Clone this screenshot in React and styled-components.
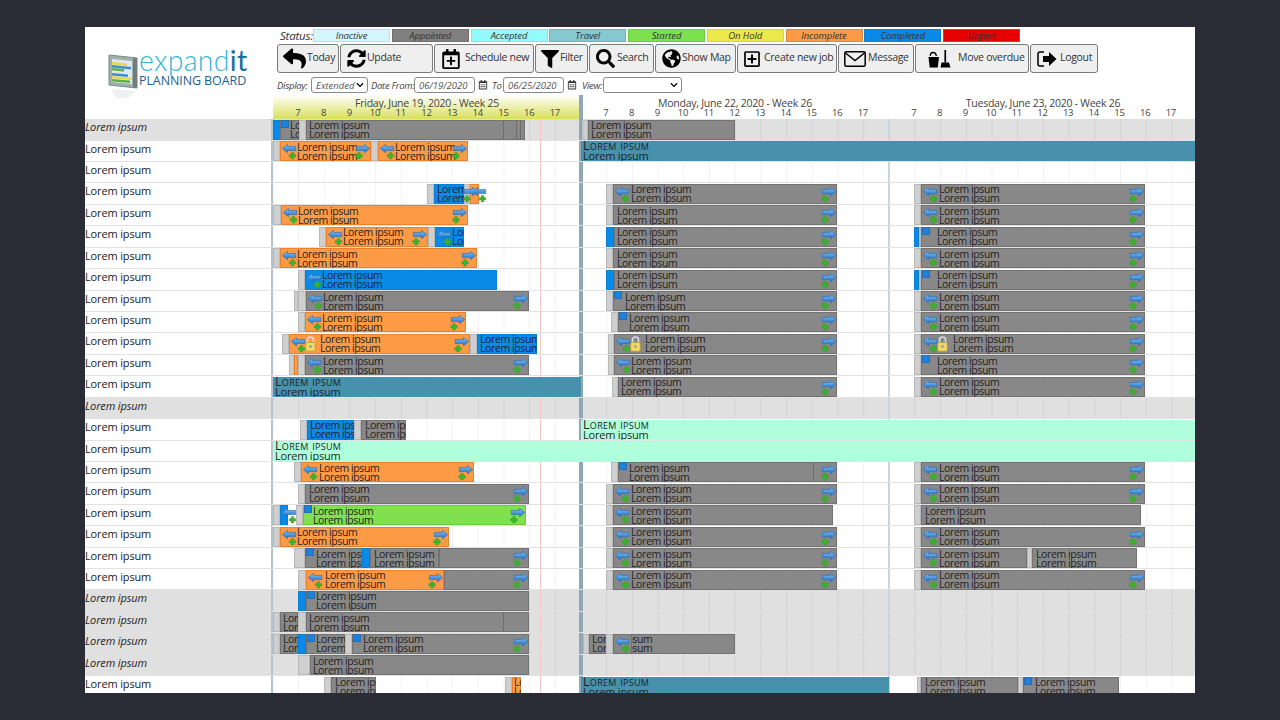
import styled, { createGlobalStyle } from "styled-components";
import {
  FaReply,
  FaSyncAlt,
  FaRegCalendarPlus,
  FaFilter,
  FaSearch,
  FaGlobeAmericas,
  FaRegPlusSquare,
  FaRegCalendarAlt,
  FaChevronDown,
} from "react-icons/fa";

const FONT = `"Open Sans", "Noto Sans", "Liberation Sans", sans-serif`;
const TRACK_X = 273;
const HOUR = 25.7;
const ROW = 21.43;

const COLORS = {
  lead: ["#cfcfcf", "#b9b9b9"],
  gray: ["#888888", "#727272"],
  orange: ["#fd9a45", "#e8822c"],
  blue: ["#0a8ae8", "#0a7fd6"],
  green: ["#80e04e", "#6cc93d"],
  teal: ["#4891ad", "#4891ad"],
  mint: ["#b0ffdc", "#b0ffdc"],
};

const GlobalStyle = createGlobalStyle`
  html, body {
    margin: 0;
    background: #2a2d36;
    font-family: ${FONT};
  }
`;

const Frame = styled.div`
  width: 1110px;
  height: 666px;
  margin: 27px 85px;
  background: #fff;
  overflow: hidden;
`;

const Header = styled.header`
  display: flex;
  height: 68px;
`;

const LogoPane = styled.div`
  width: 188px;
  flex: none;
  display: flex;
  align-items: flex-start;
  padding: 26px 0 0 23px;
  box-sizing: border-box;
  gap: 1px;
`;

const LogoText = styled.div`
  display: flex;
  flex-direction: column;
  margin-top: -5px;
`;

const LogoWord = styled.span`
  font-family: "Lato", sans-serif;
  font-weight: 300;
  font-size: 28.5px;
  line-height: 25px;
  color: #35b5d6;
  letter-spacing: 0.3px;

  b {
    font-weight: 400;
    color: #1b6d9c;
  }
`;

const LogoSub = styled.span`
  font-size: 12.5px;
  line-height: 15px;
  color: #1d5f8f;
  letter-spacing: -0.1px;
  white-space: nowrap;
`;

const Tools = styled.div`
  flex: 1;
  padding-top: 2px;
  min-width: 0;
`;

const Legend = styled.div`
  display: flex;
  align-items: center;
  height: 13px;
  padding-left: 7px;
`;

const StatusLabel = styled.span`
  font-size: 11.5px;
  font-style: italic;
  color: #333;
  width: 33px;
  letter-spacing: -0.2px;
`;

const LegendItem = styled.span`
  width: 77px;
  height: 13px;
  margin-right: 1.75px;
  box-sizing: border-box;
  border: 1px solid ${({ $edge }) => $edge};
  background: ${({ $fill }) => $fill};
  color: #333;
  font-size: 9.5px;
  font-style: italic;
  line-height: 11px;
  text-align: center;
  letter-spacing: -0.1px;
`;

const Buttons = styled.div`
  display: flex;
  gap: 1px;
  margin: 2px 0 0 4px;
`;

const ToolButton = styled.button`
  width: ${({ $w }) => $w}px;
  height: 29px;
  flex: none;
  display: flex;
  align-items: center;
  gap: ${({ $gap }) => $gap ?? 2}px;
  padding: 0 0 0 ${({ $pad }) => $pad ?? 6}px;
  box-sizing: border-box;
  background: #efefef;
  border: 1px solid #7a7a7a;
  border-radius: 3px;
  font-family: ${FONT};
  font-size: 10.5px;
  letter-spacing: -0.3px;
  color: #333;
  white-space: nowrap;

  span {
    margin-top: -3px;
  }

  svg {
    flex: none;
    color: #000;
  }
`;

const FilterBar = styled.div`
  display: flex;
  align-items: center;
  height: 16px;
  margin: 4px 0 0 4px;
  font-size: 9.5px;
  font-style: italic;
  color: #444;
`;

const FilterLabel = styled.span`
  width: ${({ $w }) => $w}px;
  flex: none;
  margin: 0 2px 0 ${({ $before }) => $before ?? 0}px;
  letter-spacing: -0.3px;
  white-space: nowrap;
`;

const Field = styled.span`
  width: ${({ $w }) => $w}px;
  height: 16px;
  flex: none;
  box-sizing: border-box;
  display: flex;
  align-items: center;
  justify-content: space-between;
  padding: 0 3px 0 4px;
  background: #fff;
  border: 1px solid #8a8a8a;
  border-radius: 3px;
  color: #555;
  font-size: 9.5px;
  font-style: italic;

  svg {
    color: #000;
  }
`;

const CalendarIcon = styled(FaRegCalendarAlt)`
  flex: none;
  width: 12px;
  margin-left: 2px;
  color: #333;
`;

const DayHeads = styled.div`
  display: flex;
  height: 24.2px;
  margin-left: 188px;
`;

const DayHead = styled.div`
  width: ${({ $w }) => $w}px;
  flex: none;
  box-sizing: border-box;
  margin-left: ${({ $pull }) => ($pull ? "-2px" : "0")};
  background: ${({ $today }) =>
    $today ? "linear-gradient(#fff, #d9e05a)" : "transparent"};
  border-right: ${({ $today }) => ($today ? "4px solid #8fa7b6" : "0")};
  color: #444;
`;

const DayTitle = styled.div`
  width: 308px;
  text-align: center;
  font-size: 10.5px;
  letter-spacing: -0.25px;
  line-height: 12px;
  padding-top: 2px;
`;

const Hours = styled.div`
  display: flex;
  width: 296px;
  padding-left: 12.15px;
  font-size: 9.5px;
  letter-spacing: -0.2px;
  line-height: 10px;
  margin-top: -1px;
`;

const Hour = styled.span`
  width: ${HOUR}px;
  flex: none;
  text-align: center;
`;

const Row = styled.div`
  display: flex;
  height: ${ROW}px;
  box-sizing: border-box;
  border-bottom: 1.4px solid #e2e2e2;
  background: ${({ $off }) => ($off ? "#e0e0e0" : "#fff")};
`;

const RowLabel = styled.div`
  width: 186px;
  flex: none;
  font-size: 11px;
  letter-spacing: -0.15px;
  font-style: ${({ $off }) => ($off ? "italic" : "normal")};
  line-height: 16px;
  color: #222;
  white-space: nowrap;
`;

const Track = styled.div`
  position: relative;
  flex: 1;
  border-left: 2px solid #b4c2cb;
  --line: ${({ $off }) => ($off ? "#d2d2d2" : "#f2f2f2")};
  background-image:
    linear-gradient(#8fa7b6, #8fa7b6),
    linear-gradient(#c9d5dc, #c9d5dc),
    linear-gradient(#f6c6c8, #f6c6c8),
    linear-gradient(to right, var(--line) 1px, transparent 1px);
  background-repeat: no-repeat, no-repeat, no-repeat, repeat;
  background-size: 4px 100%, 2px 100%, 1px 100%, ${HOUR}px 100%;
  background-position: 306px 0, 615px 0, 266.5px 0, -0.7px 0;
`;

const Bar = styled.div.attrs(({ $x, $end }) => ({
  style: { left: `${$x - TRACK_X}px`, width: `${$end - $x}px` },
}))`
  position: absolute;
  top: 0.5px;
  height: 20px;
  box-sizing: border-box;
  background: ${({ $kind }) => COLORS[$kind][0]};
  border: 1px solid ${({ $kind }) => COLORS[$kind][1]};
`;

const BarText = styled.div`
  position: absolute;
  inset: -1px;
  overflow: hidden;
  padding: ${({ $wide }) => ($wide ? 0 : 1.5)}px 0 0 ${({ $pad }) => $pad}px;
  font-size: ${({ $wide }) => ($wide ? 11 : 10.5)}px;
  letter-spacing: ${({ $wide }) => ($wide ? -0.2 : -0.4)}px;
  line-height: ${({ $wide }) => ($wide ? 10 : 9)}px;
  color: #1f1f1f;
  white-space: nowrap;
`;

const Caps = styled.div`
  font-variant: small-caps;
  font-size: 12.5px;
  letter-spacing: 0.3px;
`;

const Square = styled.span`
  position: absolute;
  left: 0;
  top: -1px;
  width: 8px;
  height: 8px;
  box-sizing: border-box;
  background: #1c82dc;
  border: 1px solid #2a6cb4;
`;

const Divider = styled.span.attrs(({ $at }) => ({
  style: { left: `${$at}px` },
}))`
  position: absolute;
  top: 0;
  bottom: 0;
  width: 1px;
  background: #6c6c6c;
`;

const IconSlot = styled.svg`
  position: absolute;
  top: 2px;
  ${({ $side }) => ($side === "left" ? "left: 1px;" : "right: 0;")}
  overflow: visible;
`;

const Lock = styled.svg`
  position: absolute;
  left: 15px;
  top: 1px;
`;

const GradientDefs = styled.svg`
  position: absolute;
  width: 0;
  height: 0;
`;

// same drawing both ways, flipped for the right hand side
const Arrow = ({ side }) => (
  <IconSlot $side={side} width="14" height="16" viewBox="0 0 14 16">
    <path
      d={
        side === "left"
          ? "M0.3 4.5 L5.5 0.3 V2.4 H13.7 V6.6 H5.5 V8.7 Z"
          : "M13.7 4.5 L8.5 0.3 V2.4 H0.3 V6.6 H8.5 V8.7 Z"
      }
      fill="url(#arrowFill)"
      stroke="#2168b4"
      strokeWidth="0.6"
    />
    <path
      d={
        side === "left"
          ? "M9.2 8.5 h2.6 v2 h2 v2.6 h-2 v2 h-2.6 v-2 h-2 v-2.6 h2 Z"
          : "M1.7 8.5 h2.6 v2 h2 v2.6 h-2 v2 h-2.6 v-2 h-2 v-2.6 h2 Z"
      }
      fill="#3cb32d"
      stroke="#2f8f24"
      strokeWidth="0.3"
    />
  </IconSlot>
);

const Padlock = () => (
  <Lock width="11" height="16" viewBox="0 0 11 16">
    <path d="M2.5 7 V4 a3 3 0 0 1 6 0 V7" fill="none" stroke="#d8dde0" strokeWidth="1.6" />
    <rect x="0.7" y="6.5" width="9.6" height="8.8" rx="1.2" fill="#f1d766" stroke="#b59a35" strokeWidth="0.7" />
    <circle cx="5.5" cy="10.5" r="1.3" fill="#8c99a8" />
  </Lock>
);

const BoardLogo = () => (
  <svg width="30" height="48" viewBox="0 0 30 48">
    <path d="M1 2 L29 5 V35 L1 32 Z" fill="#9fb0ae" stroke="#7b8a8a" />
    <path d="M4 6 L24 8 V31 L4 29 Z" fill="#dfe8ea" />
    <path d="M4 9 L19 10.5 V13 L4 11.5 Z" fill="#e7d84a" />
    <path d="M4 12 L23 14 V16.5 L4 14.5 Z" fill="#3d8ed0" />
    <path d="M4 15 L16 16 V18.5 L4 17.5 Z" fill="#5fb04a" />
    <path d="M4 20 L20 21.5 V24 L4 22.5 Z" fill="#3d8ed0" />
    <path d="M4 23 L24 25 V27 L4 25.2 Z" fill="#e7d84a" />
    <path d="M4 26 L22 27.6 V30 L4 28.4 Z" fill="#5fb04a" />
    <path d="M25 5 L29 5 V35 L25 34.5 Z" fill="#6f7d7d" />
    <path d="M3 36 L28 38 L20 45 L8 45 Z" fill="#eef1f1" />
  </svg>
);

const BucketBroom = () => (
  <svg width="23" height="18" viewBox="0 0 23 18" fill="#000">
    <path d="M0.5 7 H11 L9.8 17.5 H1.7 Z" />
    <path d="M2.3 6 a3 3.5 0 0 1 6 0" fill="none" stroke="#000" strokeWidth="1.3" />
    <rect x="16.4" y="0" width="1.7" height="12.5" />
    <path d="M13.5 12.5 H21 L22.5 17.5 H12.5 Z" />
  </svg>
);

const EnvelopeIcon = () => (
  <svg width="22" height="16" viewBox="0 0 22 16" fill="none" stroke="#000" strokeWidth="1.5">
    <rect x="0.8" y="0.8" width="20.4" height="14.4" rx="1.5" />
    <path d="M1.5 2 L11 9.5 L20.5 2" />
  </svg>
);

const LogoutIcon = () => (
  <svg width="20" height="18" viewBox="0 0 20 18" fill="#000">
    <path d="M7 2 H3 a2 2 0 0 0 -2 2 V14 a2 2 0 0 0 2 2 H7" fill="none" stroke="#000" strokeWidth="1.5" />
    <path d="M6 6 H12 V2 L19.5 9 L12 16 V12 H6 Z" />
  </svg>
);

const STATUSES = [
  ["Inactive", "#d5f6fc", "#a9e3ee"],
  ["Appointed", "#808080", "#6f6f6f"],
  ["Accepted", "#93fbfb", "#7fe6e6"],
  ["Travel", "#85c8cf", "#6fb4bc"],
  ["Started", "#7de04d", "#6ccc3e"],
  ["On Hold", "#ebe84c", "#d6d33e"],
  ["Incomplete", "#fd9a45", "#e8822c"],
  ["Completed", "#0a8ae8", "#0a7fd6"],
  ["Urgent", "#e60000", "#f03030"],
];

const TOOLBAR = [
  { label: "Today", w: 62, pad: 5, gap: 1, icon: <FaReply size={23} /> },
  { label: "Update", w: 93, pad: 6, gap: 1, icon: <FaSyncAlt size={19} /> },
  { label: "Schedule new", w: 100, pad: 6, gap: 4, icon: <FaRegCalendarPlus size={20} /> },
  { label: "Filter", w: 53, pad: 5, gap: 1, icon: <FaFilter size={18} /> },
  { label: "Search", w: 65, pad: 6, icon: <FaSearch size={19} /> },
  { label: "Show Map", w: 81, pad: 6, gap: 1, icon: <FaGlobeAmericas size={19} /> },
  { label: "Create new job", w: 100, pad: 5, gap: 3, icon: <FaRegPlusSquare size={18} /> },
  { label: "Message", w: 76, pad: 5, gap: 2, icon: <EnvelopeIcon /> },
  { label: "Move overdue", w: 114, pad: 12, gap: 7, icon: <BucketBroom /> },
  { label: "Logout", w: 68, pad: 6, gap: 3, icon: <LogoutIcon /> },
];

const DAYS = [
  { title: "Friday, June 19, 2020 - Week 25", w: 310, today: true },
  { title: "Monday, June 22, 2020 - Week 26", w: 308, pull: true },
  { title: "Tuesday, June 23, 2020 - Week 26", w: 308 },
];

const HOURS = [7, 8, 9, 10, 11, 12, 13, 14, 15, 16, 17];

// x, end and text x are page pixels, flags: l/r arrows, k lock, s blue square
const seg = (kind) => (x, end, t, f = "", div = []) => ({ kind, x, end, t, f, div });
const L = (x, end) => ({ kind: "lead", x, end, f: "", div: [] });
const G = seg("gray");
const O = seg("orange");
const B = seg("blue");
const N = seg("green");
const T = seg("teal");
const M = seg("mint");

const mon = () => [L(606, 613), G(613, 837, 631, "lr")];
const tue = () => [L(914, 921), G(921, 1145, 939, "lr")];

const ROWS = [
  { off: true, bars: [B(273, 281), G(280, 299, 290, "s"), L(299, 306), G(306, 525, 309, "", [503, 516, 520]), L(582, 588), G(588, 735, 591)] },
  { bars: [L(273, 280), O(280, 371, 297, "lr"), L(371, 378), O(378, 468, 395, "lr"), T(581, 1195, 583)] },
  { bars: [] },
  { bars: [L(427, 434), B(434, 464, 437), L(464, 470), O(470, 479, 0, "lr"), ...mon(), ...tue()] },
  { bars: [L(273, 281), O(281, 468, 298, "lr"), L(606, 613), G(613, 837, 617, "r"), ...tue()] },
  { bars: [L(319, 326), O(326, 428, 343, "lr"), L(428, 435), B(435, 464, 452, "l"), B(606, 614), G(614, 837, 617, "r"), B(914, 919), L(919, 921), G(921, 1145, 937, "sr")] },
  { bars: [L(273, 280), O(280, 477, 297, "lr"), L(606, 613), G(613, 837, 617, "r"), ...tue()] },
  { bars: [L(298, 305), B(305, 497, 322, "l"), B(606, 614), G(614, 837, 617, "r"), B(914, 919), L(919, 921), G(921, 1145, 937, "sr")] },
  { bars: [L(294, 298), L(298, 306), G(306, 529, 323, "lr"), L(606, 613), G(613, 837, 625, "sr"), ...tue()] },
  { bars: [L(298, 305), O(305, 466, 322, "lr"), L(611, 618), G(618, 837, 629, "sr"), ...tue()] },
  { bars: [L(282, 289), O(289, 470, 320, "lkr"), L(470, 477), B(477, 537, 480), L(608, 614), G(614, 837, 645, "lkr"), L(914, 921), G(921, 1145, 953, "lkr")] },
  { bars: [L(289, 294), O(294, 298), L(298, 305), G(305, 529, 323, "lr"), L(608, 614), G(614, 837, 631, "l"), L(914, 921), G(921, 1145, 937, "sr")] },
  { bars: [T(273, 581, 275), L(612, 618), G(618, 837, 621, "r"), ...tue()] },
  { off: true, bars: [] },
  { bars: [L(300, 307), B(307, 354, 310), L(354, 361), G(361, 406, 365), M(581, 1195, 583)] },
  { bars: [M(273, 1195, 275)] },
  { bars: [L(294, 301), O(301, 474, 319, "lr"), L(611, 618), G(618, 837, 629, "sr", [813]), ...tue()] },
  { bars: [L(298, 305), G(305, 529, 309, "r"), ...mon(), ...tue()] },
  { bars: [L(273, 280), B(280, 288, 0, "l"), L(296, 303), N(303, 526, 313, "sr"), L(606, 613), G(613, 833, 631, "l"), L(914, 921), G(921, 1141, 925)] },
  { bars: [L(273, 280), O(280, 449, 297, "lr"), ...mon(), ...tue()] },
  { bars: [L(294, 305), G(305, 362, 316, "s"), B(362, 370), G(370, 439, 374), G(439, 529, 0, "r"), ...mon(), L(914, 921), G(921, 1027, 939, "l"), L(1027, 1032), G(1032, 1137, 1036)] },
  { bars: [L(298, 306), O(306, 444, 325, "lr"), G(444, 529, 0, "r"), ...mon(), ...tue()] },
  { off: true, bars: [B(298, 306), G(306, 529, 316, "s")] },
  { off: true, bars: [L(273, 280), G(280, 298, 283), L(298, 306), G(306, 529, 309, "", [503])] },
  { off: true, bars: [L(273, 280), G(280, 298, 283), B(298, 306), G(306, 345, 316, "s"), L(345, 352), G(352, 529, 363, "sr"), L(583, 589), G(589, 735, 592), L(606, 613), G(613, 632, 0, "l")] },
  { off: true, bars: [L(298, 310), G(310, 529, 313)] },
  { bars: [L(324, 331), G(331, 376, 335), L(505, 512), O(512, 521, 514), T(581, 889, 583), L(917, 921), G(921, 1018, 925), L(1018, 1023), G(1023, 1119, 1035, "s")] },
];

const TimeBar = ({ kind, x, end, t, f, div }) => {
  const wide = kind === "teal" || kind === "mint";
  return (
    <Bar $kind={kind} $x={x} $end={end}>
      {t > 0 && (
        <BarText $pad={t - x} $wide={wide}>
          {wide ? <Caps>Lorem ipsum</Caps> : <div>Lorem ipsum</div>}
          <div>Lorem ipsum</div>
        </BarText>
      )}
      {div.map((d) => (
        <Divider key={d} $at={d - x - 1} />
      ))}
      {f.includes("s") && <Square />}
      {f.includes("l") && <Arrow side="left" />}
      {f.includes("k") && <Padlock />}
      {f.includes("r") && <Arrow side="right" />}
    </Bar>
  );
};

const App = () => (
  <>
    <GlobalStyle />
    <GradientDefs aria-hidden="true">
      <defs>
        <linearGradient id="arrowFill" x1="0" y1="0" x2="0" y2="1">
          <stop offset="0" stopColor="#8cc4f2" />
          <stop offset="1" stopColor="#176fca" />
        </linearGradient>
      </defs>
    </GradientDefs>
    <Frame>
      <Header>
        <LogoPane>
          <BoardLogo />
          <LogoText>
            <LogoWord>
              expand<b>it</b>
            </LogoWord>
            <LogoSub>PLANNING BOARD</LogoSub>
          </LogoText>
        </LogoPane>
        <Tools>
          <Legend>
            <StatusLabel>Status:</StatusLabel>
            {STATUSES.map(([name, fill, edge]) => (
              <LegendItem key={name} $fill={fill} $edge={edge}>
                {name}
              </LegendItem>
            ))}
          </Legend>
          <Buttons>
            {TOOLBAR.map((b) => (
              <ToolButton key={b.label} $w={b.w} $pad={b.pad} $gap={b.gap}>
                {b.icon}
                <span>{b.label}</span>
              </ToolButton>
            ))}
          </Buttons>
          <FilterBar>
            <FilterLabel $w={32}>Display:</FilterLabel>
            <Field $w={57}>
              Extended <FaChevronDown size={8} />
            </Field>
            <FilterLabel $w={41} $before={3}>Date From:</FilterLabel>
            <Field $w={61}>06/19/2020</Field>
            <CalendarIcon />
            <FilterLabel $w={9} $before={3}>To</FilterLabel>
            <Field $w={61}>06/25/2020</Field>
            <CalendarIcon />
            <FilterLabel $w={19} $before={4}>View:</FilterLabel>
            <Field $w={79}>
              <span />
              <FaChevronDown size={8} />
            </Field>
          </FilterBar>
        </Tools>
      </Header>
      <DayHeads>
        {DAYS.map((d) => (
          <DayHead key={d.title} $w={d.w} $today={d.today} $pull={d.pull}>
            <DayTitle>{d.title}</DayTitle>
            <Hours>
              {HOURS.map((h) => (
                <Hour key={h}>{h}</Hour>
              ))}
            </Hours>
          </DayHead>
        ))}
      </DayHeads>
      {ROWS.map((row, i) => (
        <Row key={i} $off={row.off}>
          <RowLabel $off={row.off}>Lorem ipsum</RowLabel>
          <Track $off={row.off}>
            {row.bars.map((b, j) => (
              <TimeBar key={j} {...b} />
            ))}
          </Track>
        </Row>
      ))}
    </Frame>
  </>
);

export default App;
